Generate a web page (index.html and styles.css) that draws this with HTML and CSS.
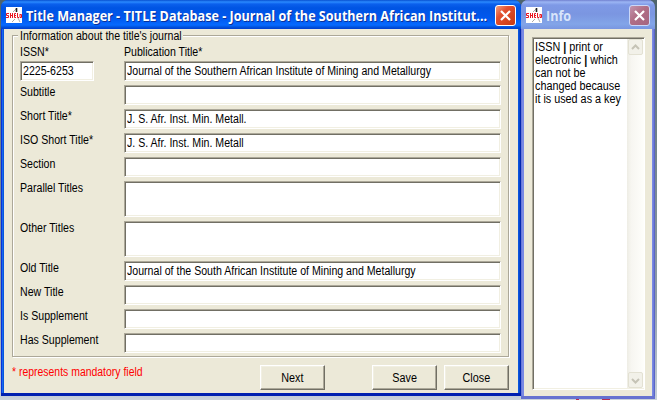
FILE: index.html
```html
<!DOCTYPE html>
<html lang="en"><head><meta charset="utf-8"><title>Title Manager</title><link rel="stylesheet" href="styles.css"></head>
<body>
<svg class="defs" width="0" height="0"><defs>
<symbol id="shield" viewBox="0 0 16 16"><path fill="#fff" d="M0 0h16v16H0z"/><path d="M6 15l3-3M12 11l2 4M7 5l4-4" fill="none" stroke="#aaa" stroke-width="1"/><path d="M10.500 1v4" stroke="#222" stroke-width="1.600"/><path d="M3 6.500H.5v2h2v2H0M4.500 6v5M6.500 6v5M4.500 8.500h2M10 6.500H8.500v4H10M8.500 8.500H10M11.500 6v4.500H13M14 7v3.500h1.500V7.500H14" fill="none" stroke="#e81420" stroke-width="1"/></symbol>
<symbol id="cross" viewBox="0 0 19 19"><path d="M5 5l9 9M14 5l-9 9" stroke="#fff" stroke-width="2.200"/></symbol>
</defs></svg>
<main class="desktop">
<section class="window main">
<header class="titlebar"><svg class="logo"><use href="#shield"/></svg><h1><span>Title Manager - TITLE Database - Journal of the Southern African Institut...</span></h1><button class="x"><svg><use href="#cross"/></svg></button></header>
<div class="content">
<div class="group"><div class="legend"><span class="t">Information about the title's journal</span></div>
<div class="row heads"><div class="label"><span class="t">ISSN*</span></div><div class="label"><span class="t">Publication Title*</span></div></div>
<div class="row"><div class="field issn"><span class="t">2225-6253</span></div><div class="field"><span class="t">Journal of the Southern African Institute of Mining and Metallurgy</span></div></div>
<div class="row"><div class="label"><span class="t">Subtitle</span></div><div class="field"></div></div>
<div class="row"><div class="label"><span class="t">Short Title*</span></div><div class="field"><span class="t">J. S. Afr. Inst. Min. Metall.</span></div></div>
<div class="row"><div class="label"><span class="t">ISO Short Title*</span></div><div class="field"><span class="t">J. S. Afr. Inst. Min. Metall</span></div></div>
<div class="row"><div class="label"><span class="t">Section</span></div><div class="field"></div></div>
<div class="row tall"><div class="label"><span class="t">Parallel Titles</span></div><div class="field"></div></div>
<div class="row tall"><div class="label"><span class="t">Other Titles</span></div><div class="field"></div></div>
<div class="row"><div class="label"><span class="t">Old Title</span></div><div class="field"><span class="t">Journal of the South African Institute of Mining and Metallurgy</span></div></div>
<div class="row"><div class="label"><span class="t">New Title</span></div><div class="field"></div></div>
<div class="row"><div class="label"><span class="t">Is Supplement</span></div><div class="field"></div></div>
<div class="row"><div class="label"><span class="t">Has Supplement</span></div><div class="field"></div></div>
</div>
<footer class="actions"><div class="note"><span class="t">* represents mandatory field</span></div><button class="btn next"><span class="c">Next</span></button><button class="btn save"><span class="c">Save</span></button><button class="btn"><span class="c">Close</span></button></footer>
</div></section>
<section class="window info">
<header class="titlebar"><svg class="logo"><use href="#shield"/></svg><h1><span>Info</span></h1><button class="x"><svg><use href="#cross"/></svg></button></header>
<div class="content"><div class="memo"><p><span class="t">ISSN <b>|</b> print or<br>electronic <b>|</b> which<br>can not be<br>changed because<br>it is used as a key</span></p>
<div class="scroll"><div class="arrow"><svg viewBox="0 0 13 14"><path d="M3 9l3.500-3.500L10 9"/></svg></div><div class="arrow"><svg viewBox="0 0 13 14"><path d="M3 6l3.500 3.500L10 6"/></svg></div></div></div></div>
</section>
</main>
</body></html>
```
FILE: styles.css
```css
*{box-sizing:border-box}
body{margin:0;overflow:hidden;font:12px/13px "Liberation Sans",Arial,sans-serif;color:#000}
.defs{position:absolute}
.desktop{width:657px;height:400px;display:flex;padding-left:1px;align-items:flex-start;
 background:linear-gradient(90deg,transparent 576px,#c02848 576px 579px,transparent 579px 602px,#b83050 602px 610px,transparent 610px) 0 397px/657px 3px no-repeat,linear-gradient(#4d646c 0,#60727a 50px,#8e9ca8 300px,#c3cdd7 396px,#cbd3da 400px)}
.window{display:flex;flex-direction:column;border-radius:7px 7px 0 0;overflow:hidden}
.main{width:520px;height:396px;background:linear-gradient(90deg,#0831d9 0 1px,#166aee 1px 2px,#0855dd 2px 3px,#0855dd 3px calc(100% - 2px),#0019a0 100%);border-bottom:3px solid #0020b0}
.info{width:134px;height:399px;background:linear-gradient(90deg,#5c68cc,#7a8ae4 1px calc(100% - 2px),#5059bd);border-bottom:3px solid #6672d0}
.titlebar{height:29px;flex:none;display:flex;align-items:center;padding:2px 5px 0;background:linear-gradient(#0850d0 0,#2a8aff 2px,#0b60ed 4px,#0054e3 8px,#0058ee 18px,#066aff 25px,#0048cf 28px,#003dd7)}
.info .titlebar{background:linear-gradient(#7180cf 0,#9bb5f4 2px,#7e99e6 5px,#7b96e1 14px,#82a5e8 24px,#7996e1 29px)}
.logo{width:16px;height:16px;flex:none;margin-top:-2px}
h1{margin:1px 0 0 4px;flex:1;min-width:0;height:19px;font:bold 13.500px/19px "Open Sans",sans-serif;color:#fff;text-shadow:1px 1px #0b3199;white-space:nowrap}
h1 span{display:inline-block;transform:scaleX(.933);transform-origin:0 0}
.info h1{color:#d8e4fa;text-shadow:none}
.x{width:21px;height:21px;padding:0;border:1px solid #fff;border-radius:3px;background:linear-gradient(135deg,#f0a080,#e25030 35%,#c83a12);flex:none}
.main .x{margin-right:0}
.info .x{margin-right:0;border-color:#cbd8f8;background:linear-gradient(135deg,#c294ae,#b06e85 45%,#a56580)}
.x svg{width:19px;height:19px;display:block}
.content{flex:1;background:#ece9d8;margin:0 3px}
.main .content{padding:6px 9px 0 8px}
.group{height:322px;border:1px solid #aca899;box-shadow:1px 1px #fff,inset 1px 1px #fff;padding:0 6px 0 7px}
.legend{width:165px;margin-left:-2px;padding-left:2px;background:#ece9d8;margin-top:-7px;height:16px;line-height:15px}
.t{display:inline-block;white-space:nowrap;transform:scaleX(.883);transform-origin:0 50%}
.c{display:inline-block;transform:scaleX(.9)}
.row{display:grid;grid-template-columns:104px 377px;height:24px;align-items:start}
.tall{height:40px}
.label{height:19px;padding-top:1px;white-space:nowrap}
.row>.label>.t{line-height:13px;vertical-align:top}
.heads{height:16px}
.heads .label{height:14px}
.field{height:20px;background:#fff;border:1px solid;border-color:#aca899 #fff #fff #aca899;box-shadow:inset 1px 1px #716f64,inset -1px -1px #f1efe2;padding:3px 2px;line-height:13px;white-space:nowrap;overflow:hidden}
.tall .field{height:36px}
.issn{width:74px}
.actions{display:flex;height:26px;margin-top:8px}
.note{width:248px;color:#f00;padding-top:1px}
.note .t{transform:scaleX(.87)}
.btn{width:65px;height:25px;padding:0;background:#ece9d8;border:1px solid;border-color:#fff #716f64 #716f64 #fff;box-shadow:inset -1px -1px #aca899,inset 1px 1px #f1efe2;font:12px/14px "Liberation Sans",Arial,sans-serif;color:#000}
.next{margin-right:47px}.save{margin-right:7px}
.info .content{padding:8px 7px 8px 8px}
.memo{height:353px;background:#fff;border:1px solid;border-color:#aca899 #fff #fff #aca899;box-shadow:inset 1px 1px #716f64,inset -1px -1px #f1efe2;display:flex;padding:1px}
.memo p{margin:2px 0 0 1px;width:92px}
.memo .t{transform:scaleX(.9)}
.scroll{width:17px;margin-left:auto;flex:none;background:linear-gradient(90deg,#eeede5,#f7f6f1 25%,#fefefb);display:flex;flex-direction:column;justify-content:space-between;padding:0 1px}
.arrow{width:15px;height:16px;border:1px solid #e3e1d3;border-radius:2px;background:#f2f1e9}
.arrow svg{width:13px;height:14px;display:block;fill:none;stroke:#c5c3b6;stroke-width:2}
```
